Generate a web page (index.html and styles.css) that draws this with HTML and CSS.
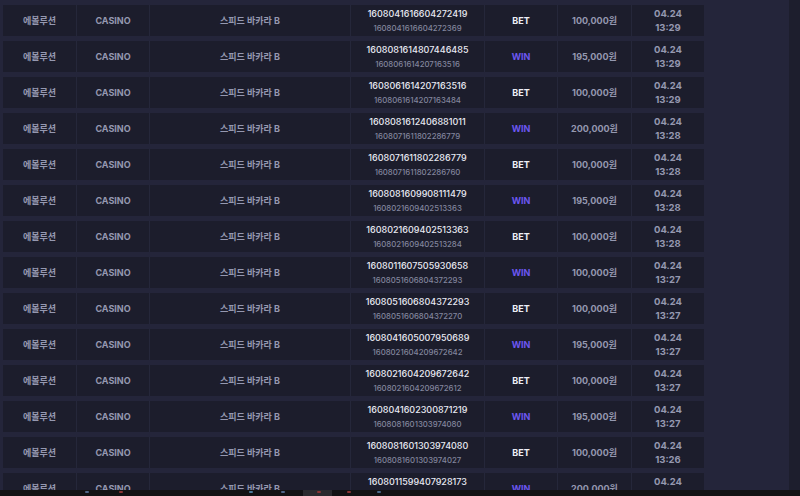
FILE: index.html
```html
<!DOCTYPE html>
<html lang="ko">
<head>
<meta charset="utf-8">
<link rel="stylesheet" href="styles.css">
</head>
<body>
<div class="page">
  <main class="list">
    <div class="row"><div class="c">에볼루션</div><div class="c">CASINO</div><div class="c">스피드 바카라 B</div><div class="c id"><span class="m">1608041616604272419</span><span class="s">1608041616604272369</span></div><div class="c bet">BET</div><div class="c">100,000원</div><div class="c dt"><span>04.24</span><span>13:29</span></div></div>
    <div class="row"><div class="c">에볼루션</div><div class="c">CASINO</div><div class="c">스피드 바카라 B</div><div class="c id"><span class="m">1608081614807446485</span><span class="s">1608061614207163516</span></div><div class="c win">WIN</div><div class="c">195,000원</div><div class="c dt"><span>04.24</span><span>13:29</span></div></div>
    <div class="row"><div class="c">에볼루션</div><div class="c">CASINO</div><div class="c">스피드 바카라 B</div><div class="c id"><span class="m">1608061614207163516</span><span class="s">1608061614207163484</span></div><div class="c bet">BET</div><div class="c">100,000원</div><div class="c dt"><span>04.24</span><span>13:29</span></div></div>
    <div class="row"><div class="c">에볼루션</div><div class="c">CASINO</div><div class="c">스피드 바카라 B</div><div class="c id"><span class="m">1608081612406881011</span><span class="s">1608071611802286779</span></div><div class="c win">WIN</div><div class="c">200,000원</div><div class="c dt"><span>04.24</span><span>13:28</span></div></div>
    <div class="row"><div class="c">에볼루션</div><div class="c">CASINO</div><div class="c">스피드 바카라 B</div><div class="c id"><span class="m">1608071611802286779</span><span class="s">1608071611802286760</span></div><div class="c bet">BET</div><div class="c">100,000원</div><div class="c dt"><span>04.24</span><span>13:28</span></div></div>
    <div class="row"><div class="c">에볼루션</div><div class="c">CASINO</div><div class="c">스피드 바카라 B</div><div class="c id"><span class="m">1608081609908111479</span><span class="s">1608021609402513363</span></div><div class="c win">WIN</div><div class="c">195,000원</div><div class="c dt"><span>04.24</span><span>13:28</span></div></div>
    <div class="row"><div class="c">에볼루션</div><div class="c">CASINO</div><div class="c">스피드 바카라 B</div><div class="c id"><span class="m">1608021609402513363</span><span class="s">1608021609402513284</span></div><div class="c bet">BET</div><div class="c">100,000원</div><div class="c dt"><span>04.24</span><span>13:28</span></div></div>
    <div class="row"><div class="c">에볼루션</div><div class="c">CASINO</div><div class="c">스피드 바카라 B</div><div class="c id"><span class="m">1608011607505930658</span><span class="s">1608051606804372293</span></div><div class="c win">WIN</div><div class="c">100,000원</div><div class="c dt"><span>04.24</span><span>13:27</span></div></div>
    <div class="row"><div class="c">에볼루션</div><div class="c">CASINO</div><div class="c">스피드 바카라 B</div><div class="c id"><span class="m">1608051606804372293</span><span class="s">1608051606804372270</span></div><div class="c bet">BET</div><div class="c">100,000원</div><div class="c dt"><span>04.24</span><span>13:27</span></div></div>
    <div class="row"><div class="c">에볼루션</div><div class="c">CASINO</div><div class="c">스피드 바카라 B</div><div class="c id"><span class="m">1608041605007950689</span><span class="s">1608021604209672642</span></div><div class="c win">WIN</div><div class="c">195,000원</div><div class="c dt"><span>04.24</span><span>13:27</span></div></div>
    <div class="row"><div class="c">에볼루션</div><div class="c">CASINO</div><div class="c">스피드 바카라 B</div><div class="c id"><span class="m">1608021604209672642</span><span class="s">1608021604209672612</span></div><div class="c bet">BET</div><div class="c">100,000원</div><div class="c dt"><span>04.24</span><span>13:27</span></div></div>
    <div class="row"><div class="c">에볼루션</div><div class="c">CASINO</div><div class="c">스피드 바카라 B</div><div class="c id"><span class="m">1608041602300871219</span><span class="s">1608081601303974080</span></div><div class="c win">WIN</div><div class="c">195,000원</div><div class="c dt"><span>04.24</span><span>13:27</span></div></div>
    <div class="row"><div class="c">에볼루션</div><div class="c">CASINO</div><div class="c">스피드 바카라 B</div><div class="c id"><span class="m">1608081601303974080</span><span class="s">1608081601303974027</span></div><div class="c bet">BET</div><div class="c">100,000원</div><div class="c dt"><span>04.24</span><span>13:26</span></div></div>
    <div class="row"><div class="c">에볼루션</div><div class="c">CASINO</div><div class="c">스피드 바카라 B</div><div class="c id"><span class="m">1608011599407928173</span><span class="s">1608011599407928150</span></div><div class="c win">WIN</div><div class="c">200,000원</div><div class="c dt"><span>04.24</span><span>13:26</span></div></div>
  </main>
  <aside class="scroll"></aside>
</div>
<div class="taskbar">
  <span class="tb-icon t1"></span>
  <span class="tb-icon t2"></span>
  <span class="tb-icon t3"></span>
  <span class="tb-icon t4"></span>
  <span class="tb-active"><span class="tb-icon t6"></span></span>
  <span class="tb-icon t5"></span>
  <span class="tb-icon t7"></span>
</div>
</body>
</html>
```
FILE: styles.css
```css
html, body {
  margin: 0;
  padding: 0;
  height: 100%;
  overflow: hidden;
  background: #24253a;
}
body {
  font-family: Inter, "Noto Sans CJK KR", sans-serif;
  color: #9a9db4;
}
.page {
  display: flex;
  height: 100%;
}
.list {
  flex: 1;
  padding: 5px 0 0 3px;
  display: flex;
  flex-direction: column;
  gap: 5px;
}
.row {
  width: 701px;
  height: 31px;
  flex: none;
  display: grid;
  grid-template-columns: 73px 72px 200px 133px 72px 73px 72px;
  column-gap: 1px;
  background: #25273a;
}
.c {
  background: #1c1d2c;
  display: flex;
  align-items: center;
  justify-content: center;
  font-size: 9px;
  font-weight: 700;
  color: #9598b0;
}
.id {
  flex-direction: column;
  gap: 4px;
  font-weight: 500;
}
.id .m {
  font-size: 9px;
  color: #e8e9f2;
  line-height: 11px;
}
.id .s {
  font-size: 7.8px;
  color: #82859d;
  line-height: 10px;
}
.bet {
  color: #eceef6;
}
.win {
  color: #6b57f0;
}
.dt {
  flex-direction: column;
  gap: 3px;
  line-height: 11px;
  font-size: 9.5px;
}
.scroll {
  width: 11px;
  flex: none;
  background: #1d1e2d;
}
.taskbar {
  position: fixed;
  left: 0;
  right: 0;
  bottom: 0;
  height: 6px;
  background: #121214;
}
.tb-icon {
  position: absolute;
  top: 1px;
  width: 4px;
  height: 2px;
  border-radius: 1px;
}
.t1 { left: 85px; background: #4f6688; }
.t2 { left: 119px; background: #8a3434; }
.t3 { left: 249px; background: #4a7a9a; }
.t4 { left: 281px; background: #4f6688; }
.tb-active {
  position: absolute;
  left: 303px;
  top: 0;
  width: 29px;
  height: 6px;
  background: #2a2a2e;
}
.t6 { left: 14px; background: #8a3434; }
.t5 { left: 347px; background: #8a3434; }
.t7 { left: 377px; background: #4a6a8a; }
```
